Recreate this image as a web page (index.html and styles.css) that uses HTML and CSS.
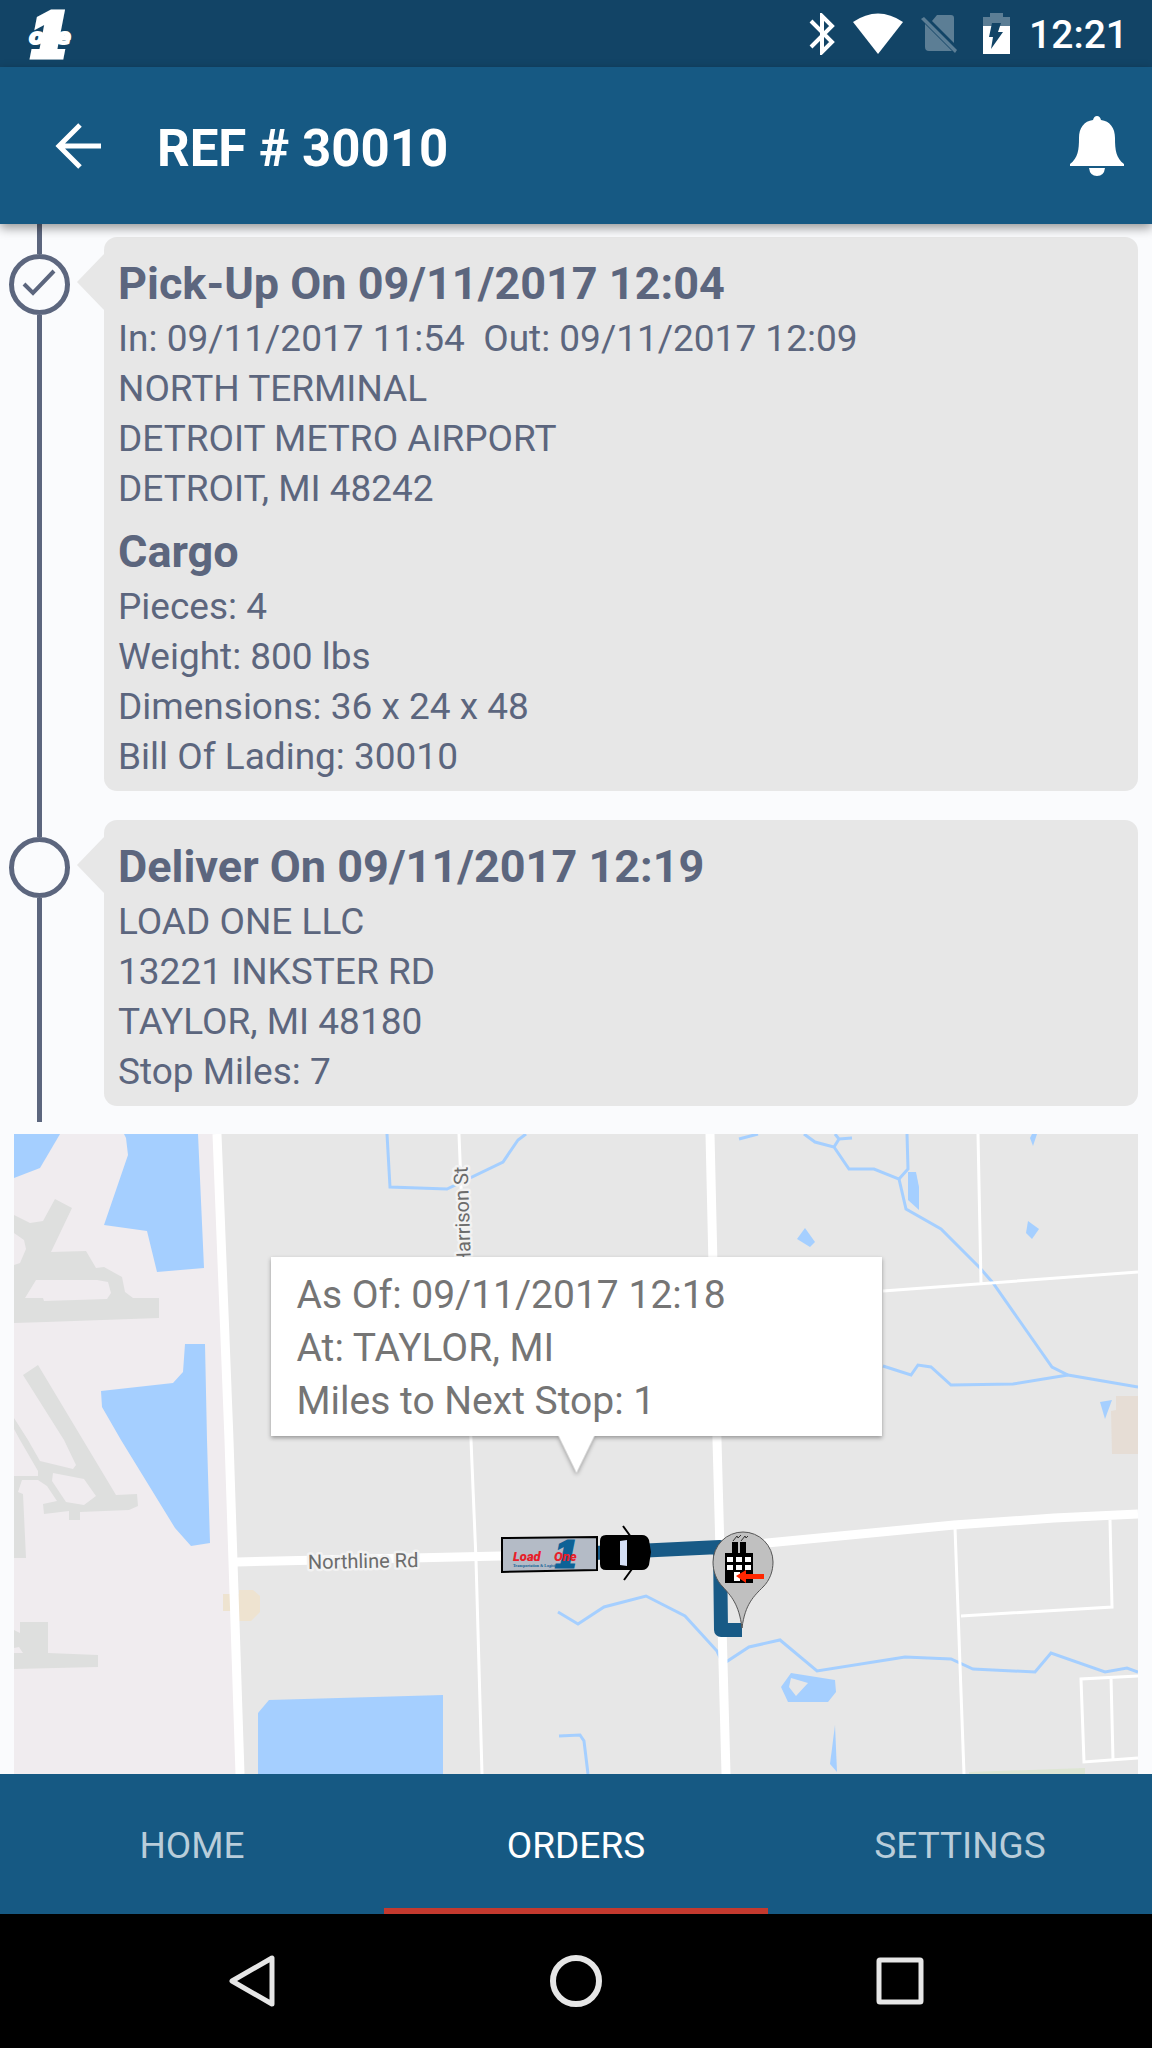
FILE: index.html
```html
<!DOCTYPE html>
<html lang="en">
<head>
  <meta charset="UTF-8">
  <meta name="viewport" content="width=device-width, initial-scale=1">
  <title>REF # 30010</title>
  <link rel="stylesheet" href="styles.css">
</head>
<body>
<div class="status-bar">
  <svg class="app-icon" width="50" height="56" viewBox="0 0 50 56">
    <text class="app-one" x="4" y="50">1</text>
    <text class="app-letter" x="3" y="38">o</text>
    <text class="app-letter" x="30" y="38">e</text>
  </svg>
  <div class="status-icons">
    <!-- bluetooth -->
    <svg width="26" height="42" viewBox="0 0 26 42">
      <path d="M2 8 L23 29 L13 39 V3 L23 13 L2 34" fill="none" stroke="#fff" stroke-width="4"/>
    </svg>
    <!-- wifi -->
    <svg width="50" height="42" viewBox="0 0 50 42">
      <path d="M0 9 Q25 -8 50 9 L25 41 Z" fill="#fff"/>
    </svg>
    <!-- no sim -->
    <svg width="36" height="42" viewBox="0 0 36 42">
      <path d="M11 8 L16 2 H30 Q33 2 33 5 V30 Z M4 11 L31 38 H8 Q4 38 4 34 Z M0 6 L3 4 L36 37 L34 40 Z" fill="#5c7e95"/>
    </svg>
    <!-- battery -->
    <svg width="36" height="42" viewBox="0 0 36 42">
      <path d="M8 14 V4 H15 V0 H28 V4 H35 V14 Z" fill="#5c7e95"/>
      <path d="M8 13 H35 V41 H8 Z" fill="#fff"/>
      <path d="M17 10 H26 L23 19 H28 L16 36 L18 24 H14 Z" fill="#124466"/>
    </svg>
    <span class="clock">12:21</span>
  </div>
</div>

<header class="app-bar">
  <a href="#" class="back" aria-label="Back">
    <svg width="48" height="48" viewBox="0 0 48 48">
      <path d="M46 24 H6 M25 3 L4 24 L25 45" fill="none" stroke="#fff" stroke-width="5"/>
    </svg>
  </a>
  <h1>REF # 30010</h1>
  <button class="bell" aria-label="Notifications">
    <svg width="54" height="60" viewBox="0 0 54 60">
      <path d="M27 0 Q30 0 31 4 C40 5 45 12 45 22 C45 34 46 42 54 48 V50 H0 V48 C8 42 9 34 9 22 C9 12 14 5 23 4 Q24 0 27 0 Z M19 52 H35 Q34 60 27 60 Q20 60 19 52 Z" fill="#fff"/>
    </svg>
  </button>
</header>

<main>
  <ol class="timeline">
    <li class="stop">
      <div class="rail">
        <span class="dot">
          <svg width="51" height="51" viewBox="0 0 51 51">
            <path d="M10 25 L19 34 L40 12" fill="none" stroke="#5c667e" stroke-width="4"/>
          </svg>
        </span>
      </div>
      <div class="card">
        <h2>Pick-Up On 09/11/2017 12:04</h2>
        <p>In: 09/11/2017 11:54&nbsp; Out: 09/11/2017 12:09</p>
        <p>NORTH TERMINAL</p>
        <p>DETROIT METRO AIRPORT</p>
        <p>DETROIT, MI 48242</p>
        <h2 class="cargo">Cargo</h2>
        <p>Pieces: 4</p>
        <p>Weight: 800 lbs</p>
        <p>Dimensions: 36 x 24 x 48</p>
        <p>Bill Of Lading: 30010</p>
      </div>
    </li>
    <li class="stop">
      <div class="rail"><span class="dot"></span></div>
      <div class="card">
        <h2>Deliver On 09/11/2017 12:19</h2>
        <p>LOAD ONE LLC</p>
        <p>13221 INKSTER RD</p>
        <p>TAYLOR, MI 48180</p>
        <p>Stop Miles: 7</p>
      </div>
    </li>
  </ol>

  <section class="map" aria-label="Map">
    <svg class="map-canvas" viewBox="0 0 1124 640" preserveAspectRatio="xMidYMid slice">
      <rect width="1124" height="640" fill="#e7e7e7"/>

      <!-- airport -->
      <path d="M0 0 H203 L215 306 L219 428 L226 640 H0 Z" fill="#f0ecef"/>
      <g fill="#dedfde" fill-rule="evenodd">
        <path d="M0 81 L16 89 L29 87 L41 65 L58 74 L37 118 L72 117 L82 134 L90 133 L108 143 L111 158 L119 164 H145 V184 L32 188 L0 189 V131 L6 129 L12 115 L10 106 L0 99 Z M22 146 H83 L94 148 L97 159 L93 165 L30 167 L29 164 H11 Z"/>
        <path d="M9 241 L24 231 L102 361 L123 360 L124 372 L115 376 L66 378 V386 H55 V377 L30 380 L29 370 L43 367 L33 352 L24 346 H8 L4 358 L9 360 L12 424 H0 V342 H24 V337 L6 306 L0 295 V284 L14 306 L26 327 L59 335 L62 331 L50 306 Z M39 339 L70 345 L82 362 L70 371 L52 368 L38 347 Z"/>
        <path d="M0 496 L6 499 V488 H34 V519 L84 521 V533 L0 535 V519 H9 L5 513 L0 514 Z"/>
      </g>
      <path d="M209 460 H225 V456 H239 L246 462 V478 L237 487 H225 V477 H209 Z" fill="#eee3d0"/>
      <path d="M1102 262 H1124 V320 H1098 L1097 277 L1102 276 Z" fill="#e6ddd5"/>
      <path d="M955 638 L1071 634 V640 H955 Z" fill="#dde5d3"/>

      <!-- lakes -->
      <g fill="#a5cfff" fill-rule="evenodd">
        <path d="M0 0 H46 L26 34 L0 44 Z"/>
        <path d="M110 0 L112 4 L114 21 L90 91 L133 97 L143 138 L190 134 L184 0 Z"/>
        <path d="M171 210 H191 L193 306 L196 409 L177 412 L161 394 L107 306 L88 273 L87 257 L159 249 L169 238 Z"/>
        <path d="M255 566 L429 561 V640 H244 V579 Z"/>
        <path d="M894 38 H902 L905 53 V76 L894 66 Z"/>
        <path d="M791 94 L801 108 L796 113 L783 105 Z"/>
        <path d="M1014 87 L1025 95 L1018 105 L1012 99 Z"/>
        <path d="M1016 4 L1018 0 H1023 L1019 12 Z"/>
        <path d="M1086 268 L1098 266 L1091 285 Z"/>
        <path d="M777 539 L821 546 L822 558 L814 568 H774 L767 553 Z M777 544 L794 549 L782 562 L775 553 Z"/>
        <path d="M821 591 L823 638 L816 630 Z"/>
      </g>

      <!-- streams -->
      <g fill="none" stroke="#a5cfff" stroke-width="3">
        <path d="M373 0 L376 53 L433 55 L489 28 L504 6 L512 0"/>
        <path d="M725 5 L744 0"/>
        <path d="M790 0 L801 8 L820 13 L835 35 H860 L885 45 L892 75 L927 95 L966 134 L979 149 L1038 233 L1054 241 L1124 253"/>
        <path d="M821 0 L825 5 L820 13 M825 5 L838 4"/>
        <path d="M893 0 L894 35 L885 45"/>
        <path d="M869 232 L897 241 L904 231 L917 233 L937 251 L999 250 L1054 241"/>
        <path d="M544 478 L564 490 L590 473 L632 462 L671 482 L703 517 L709 530 L735 513 L766 506 L803 537 L891 523 L937 525 L959 535 L1021 538 L1037 519 L1091 538 L1113 534 L1124 538"/>
        <path d="M545 602 L566 601 L570 607 L574 640"/>
      </g>

      <!-- roads -->
      <g fill="none" stroke="#fff" stroke-width="3">
        <path d="M445 0 L457 306 L462 426 L468 640"/>
        <path d="M964 0 L967 149 M869 157 L1124 138"/>
        <path d="M941 394 L950 640 M947 482 L1098 473 L1096 386"/>
        <path d="M1124 542 L1067 545 L1070 628 L1124 624 M1097 543 L1099 626"/>
      </g>
      <g fill="none" stroke="#fff" stroke-width="9">
        <path d="M203 0 L215 306 L219 428 L226 640"/>
        <path d="M696 0 L703 306 L712 640"/>
        <path d="M223 428 L487 422 L705 413 L753 409 L940 391 L1040 384 L1124 380"/>
      </g>
      <text class="road-name" transform="translate(457 132) rotate(-92)">Harrison St</text>
      <text class="road-name" transform="translate(294 435) rotate(-1)">Northline Rd</text>

      <!-- route -->
      <path d="M580 419 L706 413 L707 496 H728" fill="none" stroke="#185a86" stroke-width="14" stroke-linejoin="round"/>

      <!-- truck -->
      <path d="M609 392 L617 403 M610 446 L618 435" stroke="#000" stroke-width="2"/>
      <path d="M488 404 L583 403 L583 436 L488 438 Z" fill="#b4bbc6" stroke="#000" stroke-width="2"/>
      <path d="M592 401 L628 401 Q633 401 635 406 L637 418 L635 431 Q633 436 628 436 L592 436 Q586 436 586 430 V407 Q586 401 592 401 Z"/>
      <path d="M606 407 L613 406 V432 L606 431 Z" fill="#d5dff5"/>
      <text class="truck-one" x="540" y="433">1</text>
      <text class="truck-name" x="499" y="427">Load <tspan x="540">One</tspan></text>
      <text class="truck-sub" x="499" y="433">Transportation &amp; Logistics</text>

      <!-- destination pin -->
      <path d="M728 494 C725 470 717 462 709 453 C702 446 699 437 699 428 A30 30 0 0 1 759 428 C759 437 756 446 749 453 C740 462 731 470 728 494 Z" fill="#c0c0c0" stroke="#555"/>
      <path d="M719 407 L723 402 L724 404 L727 401 M727 407 L731 402 L732 404 L734 402" fill="none" stroke="#333"/>
      <path d="M711 419 H718 V408 H724 V419 H726 V408 H732 V419 H739 V449 H711 Z"/>
      <path d="M713 423 h6 v5 h-6 z M722 423 h6 v5 h-6 z M731 423 h6 v5 h-6 z M713 431 h6 v5 h-6 z M722 431 h6 v5 h-6 z M731 431 h6 v5 h-6 z M720 438 h6 v9 h-6 z" fill="#fff"/>
      <path d="M722 442 L732 436 V440 H750 V445 H732 V449 Z" fill="#ff2600"/>
    </svg>
    <div class="callout">
      <p>As Of: 09/11/2017 12:18</p>
      <p>At: TAYLOR, MI</p>
      <p>Miles to Next Stop: 1</p>
    </div>
  </section>
</main>

<nav class="tabs">
  <a href="#">HOME</a>
  <a href="#" class="active">ORDERS</a>
  <a href="#">SETTINGS</a>
</nav>

<div class="system-nav">
  <button aria-label="Back">
    <svg width="56" height="56" viewBox="0 0 56 56">
      <path d="M48 5 V51 L8 28 Z" fill="none" stroke="#e6e6e6" stroke-width="5" stroke-linejoin="round"/>
    </svg>
  </button>
  <button aria-label="Home">
    <svg width="56" height="56" viewBox="0 0 56 56">
      <circle cx="28" cy="28" r="23" fill="none" stroke="#e6e6e6" stroke-width="6"/>
    </svg>
  </button>
  <button aria-label="Recent apps">
    <svg width="56" height="56" viewBox="0 0 56 56">
      <rect x="7" y="7" width="42" height="42" rx="1" fill="none" stroke="#e6e6e6" stroke-width="5"/>
    </svg>
  </button>
</div>
</body>
</html>
```
FILE: styles.css
```css
* {
  box-sizing: border-box;
}

body {
  margin: 0;
  min-height: 100vh;
  display: flex;
  flex-direction: column;
  background: #fafbfd;
  color: #5c667e;
  font-family: Roboto, sans-serif;
}

h1, h2, p, ol {
  margin: 0;
  padding: 0;
}

svg {
  display: block;
}

button {
  padding: 0;
  border: none;
  background: none;
  cursor: pointer;
}

/* status bar */
.status-bar {
  height: 67px;
  padding: 0 24px 0 26px;
  display: flex;
  align-items: center;
  justify-content: space-between;
  background: #124466;
}

.app-one {
  font: italic bold 58px 'DejaVu Serif', serif;
  fill: #fff;
  stroke: #fff;
  stroke-width: 7px;
}

.app-letter {
  font: italic bold 22px 'DejaVu Sans', sans-serif;
  fill: #fff;
  stroke: #fff;
  stroke-width: 2px;
}

.status-icons {
  display: flex;
  align-items: center;
  gap: 18px;
}

.clock {
  padding-top: 3px;
  color: #fff;
  font-size: 39px;
  font-weight: 500;
}

/* app bar */
.app-bar {
  position: relative;
  z-index: 1;
  height: 157px;
  padding: 0 28px 0 55px;
  display: flex;
  align-items: center;
  background: #165983;
  color: #fff;
  box-shadow: 0 4px 10px rgba(0, 0, 0, 0.4);
}

.app-bar h1 {
  flex: 1;
  margin-left: 54px;
  padding-top: 5px;
  font-size: 51px;
  font-weight: bold;
}

/* stops */
main {
  flex: 1;
  display: flex;
  flex-direction: column;
}

.timeline {
  list-style: none;
}

.stop {
  display: flex;
  padding-right: 14px;
}

.rail {
  flex: none;
  width: 95px;
  margin-left: 9px;
  display: flex;
  flex-direction: column;
}

.rail::before,
.rail::after {
  content: "";
  width: 5px;
  height: 30px;
  margin-left: 28px;
  background: #5c667e;
}

.rail::after {
  flex: 1;
}

.dot {
  width: 61px;
  height: 61px;
  border: 5px solid #5c667e;
  border-radius: 50%;
}

.card {
  position: relative;
  flex: 1;
  margin: 13px 0 16px;
  padding: 17px 14px 9px;
  background: #e7e7e7;
  border-radius: 13px;
}

.card::before {
  content: "";
  position: absolute;
  left: -27px;
  top: 17px;
  border: 28px solid transparent;
  border-left-width: 0;
  border-right: 27px solid #e7e7e7;
}

.card h2 {
  font-size: 45px;
  line-height: 60px;
}

.card .cargo {
  margin-top: 8px;
}

.card p {
  font-size: 37px;
  line-height: 50px;
}

/* map */
.map {
  position: relative;
  flex: 1;
  min-height: 600px;
  margin: 12px 14px 0;
  overflow: hidden;
}

.map-canvas {
  position: absolute;
  width: 100%;
  height: 100%;
}

.road-name {
  font-size: 20px;
  fill: #6c6c6c;
  stroke: #f2f2f2;
  stroke-width: 5px;
  stroke-linejoin: round;
  paint-order: stroke;
}

.truck-one {
  font: italic bold 36px 'DejaVu Serif', serif;
  fill: #0d6296;
  stroke: #0d6296;
  stroke-width: 3px;
}

.truck-name {
  font: italic 900 13px Roboto, sans-serif;
  fill: #e8202a;
}

.truck-sub {
  font: bold 4px 'Liberation Serif', serif;
  fill: #0d6296;
}

.callout {
  position: absolute;
  top: 123px;
  left: 50%;
  width: 611px;
  padding: 12px 26px 8px;
  transform: translateX(-50%);
  background: #fff;
  color: #757575;
  font-size: 39px;
  line-height: 53px;
  filter: drop-shadow(0 2px 2px rgba(0, 0, 0, 0.35));
}

.callout::after {
  content: "";
  position: absolute;
  top: 100%;
  left: 50%;
  margin-left: -18px;
  border: 18px solid transparent;
  border-top: 37px solid #fff;
  border-bottom-width: 0;
}

/* tabs */
.tabs {
  height: 140px;
  display: grid;
  grid-template-columns: repeat(3, 1fr);
  background: #165983;
}

.tabs a {
  display: flex;
  align-items: center;
  justify-content: center;
  border-top: 8px solid transparent;
  border-bottom: 6px solid transparent;
  color: #b9cdda;
  font-size: 37px;
  text-decoration: none;
}

.tabs .active {
  color: #fff;
  border-bottom-color: #c3392e;
}

/* android buttons */
.system-nav {
  height: 134px;
  padding: 0 90px;
  display: grid;
  grid-template-columns: repeat(3, 1fr);
  align-items: center;
  justify-items: center;
  background: #000;
}
```
